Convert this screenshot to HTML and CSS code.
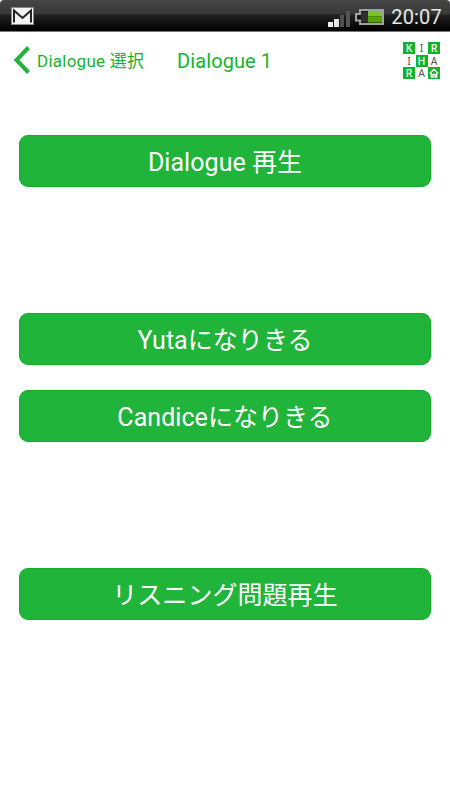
FILE: index.html
```html
<!DOCTYPE html>
<html lang="ja">
<head>
    <meta charset="UTF-8">
    <meta name="viewport" content="width=device-width, initial-scale=1.0">
    <title>Dialogue 1</title>
    <link rel="stylesheet" href="styles.css">
</head>
<body>
    <div class="status-bar">
        <svg class="mail-icon" width="23" height="18" viewBox="0 0 23 18">
            <rect x="0.5" y="0.5" width="22" height="17" fill="#f4f4f4" stroke="#8a8a8a"/>
            <path d="M3 15.5V3.5L11.5 11L20 3.5V15.5" fill="none" stroke="#222" stroke-width="2"/>
        </svg>
        <div class="status-right">
            <svg class="signal-icon" width="22" height="17" viewBox="0 0 22 17">
                <rect x="0" y="12" width="5" height="5" fill="#eee"/>
                <rect x="6" y="9" width="5" height="8" fill="#e4e4e4"/>
                <rect x="12" y="5" width="4" height="12" fill="#505050"/>
                <rect x="18" y="1" width="4" height="16" fill="#555"/>
            </svg>
            <svg class="battery-icon" width="29" height="17" viewBox="0 0 29 17">
                <path d="M5 1H28V15H5V11.500H1V5H5Z" fill="#161616" stroke="#a2a2a2" stroke-width="2"/>
                <rect x="6" y="3" width="7" height="10" fill="#303030"/>
                <rect x="13" y="2" width="14" height="5.500" fill="#7cc22a"/>
                <rect x="13" y="7.500" width="14" height="6" fill="#57a408"/>
            </svg>
            <span class="clock">20:07</span>
        </div>
    </div>

    <header>
        <a class="back" href="#">
            <svg width="17" height="28" viewBox="0 0 17 28">
                <path d="M15.500 1.500L3.500 14L15.500 26.500" fill="none" stroke="#20b43a" stroke-width="4"/>
            </svg>
            <span class="back-label">Dialogue 選択</span>
        </a>
        <h1>Dialogue 1</h1>
        <div class="logo">
            <span class="tile on">K</span>
            <span class="tile">I</span>
            <span class="tile on">R</span>
            <span class="tile">I</span>
            <span class="tile on">H</span>
            <span class="tile">A</span>
            <span class="tile on">R</span>
            <span class="tile">A</span>
            <span class="tile on">
                <svg width="10" height="10" viewBox="0 0 10 10">
                    <path d="M0.800 5.300L5 1.300L9.200 5.300M2.300 5V9H4V6.500H6V9H7.700V5" fill="none" stroke="#fff" stroke-width="1.300"/>
                </svg>
            </span>
        </div>
    </header>

    <main>
        <button type="button">Dialogue 再生</button>
        <div class="roles">
            <button type="button">Yutaになりきる</button>
            <button type="button">Candiceになりきる</button>
        </div>
        <button type="button">リスニング問題再生</button>
    </main>
</body>
</html>
```

FILE: styles.css
```css
* {
    box-sizing: border-box;
}

body {
    font-family: Roboto, "Noto Sans CJK JP", sans-serif;
    margin: 0;
    background-color: #fff;
}

.status-bar {
    display: flex;
    justify-content: space-between;
    height: 32px;
    padding: 0 8px 0 11px;
    background: linear-gradient(#464646 0, #383838 14px, #222 15px, #000 30px, #000 31px, #777 31px);
    border-radius: 4px 4px 0 0;
}

.mail-icon {
    margin-top: 7px;
}

.status-right {
    display: flex;
}

.signal-icon {
    margin-top: 10px;
}

.battery-icon {
    margin: 9px 0 0 5px;
}

.clock {
    margin-left: 7px;
    color: #e8e8e8;
    font-size: 20px;
    letter-spacing: 0.2px;
    line-height: 34px;
}

header {
    display: flex;
    height: 58px;
    padding-left: 13px;
    color: #14b42e;
}

.back {
    display: flex;
    width: 164px;
    color: inherit;
    text-decoration: none;
}

.back svg {
    margin-top: 14px;
}

.back-label {
    margin-left: 7px;
    font-size: 17px;
    letter-spacing: 0.25px;
    line-height: 59px;
    white-space: nowrap;
}

h1 {
    margin: 0;
    font-size: 20px;
    font-weight: normal;
    letter-spacing: 0.1px;
    line-height: 59px;
}

.logo {
    display: grid;
    grid-template-columns: repeat(3, 12px);
    grid-auto-rows: 12px;
    gap: 0.5px;
    margin: 10px 10px 0 auto;
}

.tile {
    display: flex;
    align-items: center;
    justify-content: center;
    color: #555;
    font-family: "Noto Sans", sans-serif;
    font-size: 10.5px;
    line-height: 12px;
}

.tile.on {
    background: #12b32c;
    color: #fff;
    font-weight: 500;
}

main {
    display: flex;
    flex-direction: column;
    gap: 126px;
    padding: 45px 19px 0;
}

.roles {
    display: flex;
    flex-direction: column;
    gap: 25px;
}

button {
    width: 100%;
    height: 52px;
    padding: 3px 0 0;
    background-color: #20b43a;
    color: #fff;
    border: 1px solid #10b024;
    border-radius: 9px;
    font-family: inherit;
    font-size: 25px;
    letter-spacing: 0.05px;
    line-height: 47px;
}
```
